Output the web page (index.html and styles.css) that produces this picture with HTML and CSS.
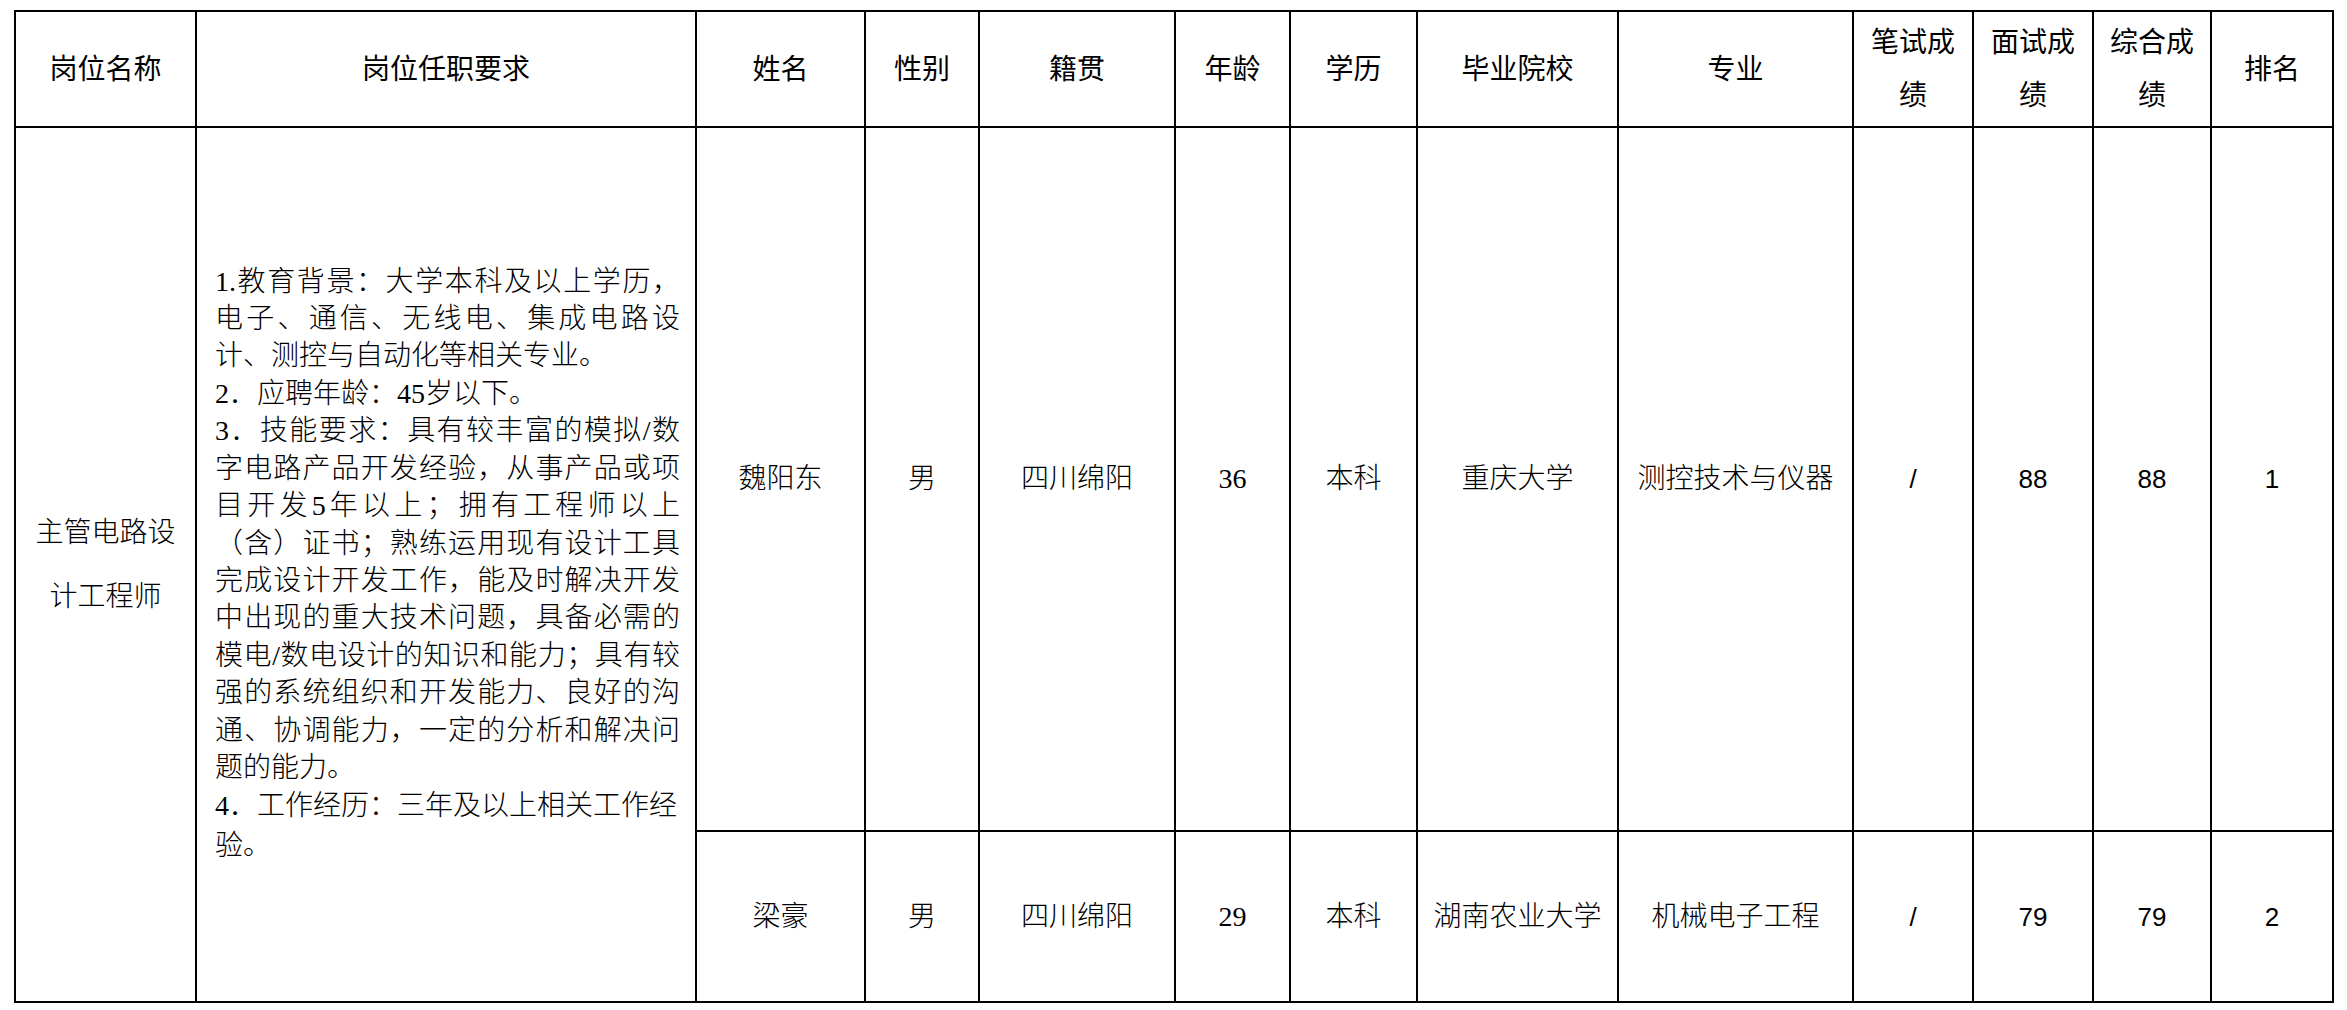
FILE: index.html
```html
<!DOCTYPE html>
<html lang="zh-CN">
<head>
<meta charset="utf-8">
<title>岗位面试成绩</title>
<link rel="stylesheet" href="styles.css">
</head>
<body>
<table class="sheet">
  <colgroup>
    <col class="w-post">
    <col class="w-req">
    <col class="w-name">
    <col class="w-sex">
    <col class="w-origin">
    <col class="w-age">
    <col class="w-edu">
    <col class="w-school">
    <col class="w-major">
    <col class="w-score">
    <col class="w-score">
    <col class="w-score2">
    <col class="w-rank">
  </colgroup>
  <thead>
    <tr class="head">
      <th>岗位名称</th>
      <th>岗位任职要求</th>
      <th>姓名</th>
      <th>性别</th>
      <th>籍贯</th>
      <th>年龄</th>
      <th>学历</th>
      <th>毕业院校</th>
      <th>专业</th>
      <th class="wrap">笔试成绩</th>
      <th class="wrap">面试成绩</th>
      <th class="wrap">综合成绩</th>
      <th>排名</th>
    </tr>
  </thead>
  <tbody>
    <tr class="r1">
      <td rowspan="2" class="post">主管电路设计工程师</td>
      <td rowspan="2" class="req">
        <div class="ln jl">1.教育背景：大学本科及以上学历，</div>
        <div class="ln jl">电子、通信、无线电、集成电路设</div>
        <div class="ln">计、测控与自动化等相关专业。</div>
        <div class="ln">2．应聘年龄：45岁以下。</div>
        <div class="ln jl">3．技能要求：具有较丰富的模拟/数</div>
        <div class="ln jl">字电路产品开发经验，从事产品或项</div>
        <div class="ln jl">目开发5年以上；拥有工程师以上</div>
        <div class="ln jl">（含）证书；熟练运用现有设计工具</div>
        <div class="ln jl">完成设计开发工作，能及时解决开发</div>
        <div class="ln jl">中出现的重大技术问题，具备必需的</div>
        <div class="ln jl">模电/数电设计的知识和能力；具有较</div>
        <div class="ln jl">强的系统组织和开发能力、良好的沟</div>
        <div class="ln jl">通、协调能力，一定的分析和解决问</div>
        <div class="ln">题的能力。</div>
        <div class="ln wide">4．工作经历：三年及以上相关工作经</div>
        <div class="ln wide">验。</div>
      </td>
      <td>魏阳东</td>
      <td>男</td>
      <td>四川绵阳</td>
      <td class="num">36</td>
      <td>本科</td>
      <td>重庆大学</td>
      <td>测控技术与仪器</td>
      <td class="sc">/</td>
      <td class="sc">88</td>
      <td class="sc">88</td>
      <td class="sc">1</td>
    </tr>
    <tr class="r2">
      <td>梁豪</td>
      <td>男</td>
      <td>四川绵阳</td>
      <td class="num">29</td>
      <td>本科</td>
      <td>湖南农业大学</td>
      <td>机械电子工程</td>
      <td class="sc">/</td>
      <td class="sc">79</td>
      <td class="sc">79</td>
      <td class="sc">2</td>
    </tr>
  </tbody>
</table>
</body>
</html>
```

FILE: styles.css
```css
html, body {
  margin: 0;
  padding: 0;
  background: #ffffff;
}

body {
  padding: 10px 0 0 14px;
  font-family: "Liberation Serif", "Noto Sans CJK SC", serif;
  color: #000000;
}

.sheet {
  border-collapse: collapse;
  table-layout: fixed;
  width: 2320px;
  font-size: 28px;
  font-weight: 300;
}

.w-post { width: 181px; }
.w-req { width: 500px; }
.w-name { width: 169px; }
.w-sex { width: 114px; }
.w-origin { width: 196px; }
.w-age { width: 115px; }
.w-edu { width: 127px; }
.w-school { width: 201px; }
.w-major { width: 235px; }
.w-score { width: 120px; }
.w-score2 { width: 118px; }
.w-rank { width: 122px; }

.sheet th,
.sheet td {
  border: 2px solid #000000;
  padding: 0 8px;
  text-align: center;
  vertical-align: middle;
  font-weight: 300;
  line-height: 34px;
}

.sheet th {
  line-height: 53px;
  font-weight: 400;
}

.head { height: 116px; }
.r1 { height: 704px; }
.r2 { height: 171px; }

.sheet td.post {
  padding: 0 14px;
  line-height: 64px;
}

.sheet td.req {
  padding: 0 15px 0 18px;
  text-align: left;
}

.ln {
  line-height: 37.4px;
  white-space: nowrap;
}

.jl {
  text-align: justify;
  text-align-last: justify;
  white-space: normal;
}

.wide {
  line-height: 40px;
}

.sheet td.sc {
  font-family: "Liberation Sans", Arial, sans-serif;
  font-size: 26px;
  font-weight: 400;
}
```
